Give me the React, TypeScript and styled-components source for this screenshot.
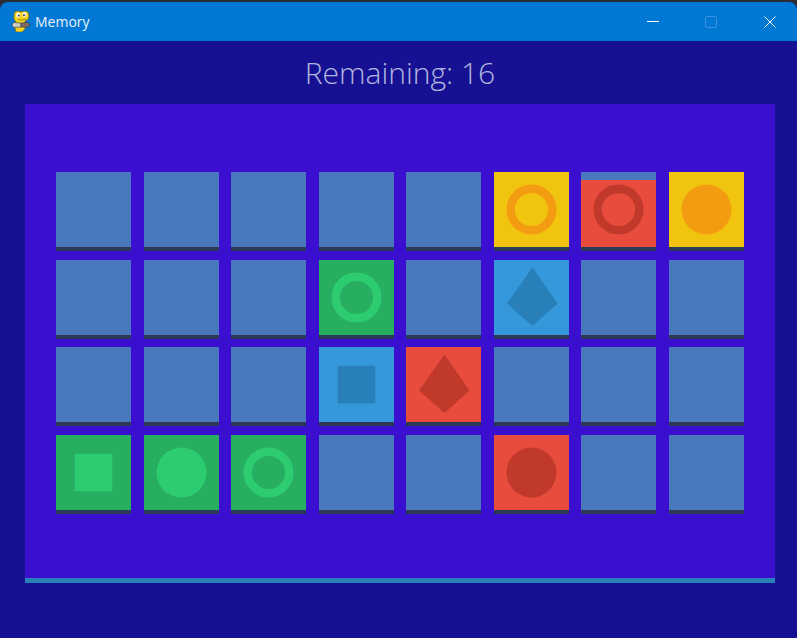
import * as React from "react";
import styled, { createGlobalStyle } from "styled-components";

type Tone = "back" | "yellow" | "red" | "green" | "blue";
type Figure = "ring" | "disc" | "square" | "diamond";

interface ICard {
  tone: Tone;
  figure?: Figure;
  flipping?: boolean;
}

const faces: Record<Tone, string> = {
  back: "#4a78bd",
  yellow: "#f1c40f",
  red: "#e74c3c",
  green: "#27ae60",
  blue: "#3498db"
};

const inks: Record<Tone, string> = {
  back: "#4a78bd",
  yellow: "#f39c12",
  red: "#c0392b",
  green: "#2ecc71",
  blue: "#2980b9"
};

const back: ICard = { tone: "back" };

const cards: ICard[] = [
  back,
  back,
  back,
  back,
  back,
  { tone: "yellow", figure: "ring" },
  { tone: "red", figure: "ring", flipping: true },
  { tone: "yellow", figure: "disc" },

  back,
  back,
  back,
  { tone: "green", figure: "ring" },
  back,
  { tone: "blue", figure: "diamond" },
  back,
  back,

  back,
  back,
  back,
  { tone: "blue", figure: "square" },
  { tone: "red", figure: "diamond" },
  back,
  back,
  back,

  { tone: "green", figure: "square" },
  { tone: "green", figure: "disc" },
  { tone: "green", figure: "ring" },
  back,
  back,
  { tone: "red", figure: "disc" },
  back,
  back
];

const Shape = ({ figure, color }: { figure: Figure; color: string }) => (
  <FigureSvg viewBox="0 0 75 75">
    {figure === "ring" && (
      <circle cx="37.5" cy="37.5" r="20.8" fill="none" stroke={color} strokeWidth="8.4" />
    )}
    {figure === "disc" && <circle cx="37.5" cy="37.5" r="25" fill={color} />}
    {figure === "square" && <rect x="18.75" y="18.75" width="37.5" height="37.5" fill={color} />}
    {figure === "diamond" && <polygon points="38.5,7.5 63.5,43.5 38.5,66 13,43.5" fill={color} />}
  </FigureSvg>
);

// the pygame snake holding its controller
const SnakeLogo = () => (
  <svg width="18" height="21" viewBox="0 0 18 21">
    <path
      d="M2 4 Q2 0 6 0 L9 1 L12 0 Q17 0 17 5 Q17 9 13 10 L13 18 L10 21 L4 21 L3 17 L4 11 Q1 8 2 4 Z"
      fill="#f5d41f"
      stroke="#7d6a10"
      strokeWidth="0.8"
    />
    <ellipse cx="6.2" cy="4" rx="2.1" ry="2.5" fill="#f6f6ee" />
    <ellipse cx="12.6" cy="3.6" rx="2.1" ry="2.5" fill="#f6f6ee" />
    <circle cx="6.8" cy="4.6" r="0.9" fill="#262626" />
    <circle cx="12" cy="4.2" r="0.9" fill="#262626" />
    <path d="M6 8.5 Q10 10 14 8" fill="none" stroke="#7d6a10" strokeWidth="0.7" />
    <path
      d="M2 11.5 L9 12 L9 16 L2.5 16.5 Q0 16 0.3 13.5 Q0.6 11.8 2 11.5 Z"
      fill="#cfccc2"
      stroke="#4c4a44"
      strokeWidth="0.7"
    />
    <path
      d="M9 12 L15.5 11.5 Q17.6 12 17.5 14 Q17.4 16 15.5 16.3 L9 16 Z"
      fill="#77716a"
      stroke="#45423d"
      strokeWidth="0.7"
    />
    <rect x="12" y="13" width="2" height="1.5" fill="#a8524a" />
  </svg>
);

const App = () => (
  <>
    <GlobalStyle />
    <Screen>
      <Window>
        <TitleBar>
          <AppIcon>
            <SnakeLogo />
          </AppIcon>
          <WindowName>Memory</WindowName>
          <Controls>
            <ControlButton>
              <svg width="12" height="12" viewBox="0 0 12 12">
                <rect x="0" y="5" width="12" height="1" fill="#ffffff" />
              </svg>
            </ControlButton>
            <ControlButton>
              <svg width="13" height="12" viewBox="0 0 13 12">
                <rect x="0.5" y="0.5" width="11" height="11" rx="1.5" fill="none" stroke="#3a93dc" />
              </svg>
            </ControlButton>
            <ControlButton>
              <svg width="12" height="12" viewBox="0 0 12 12">
                <path d="M0.5 0.5 L11.5 11.5 M11.5 0.5 L0.5 11.5" stroke="#ffffff" strokeWidth="1" />
              </svg>
            </ControlButton>
          </Controls>
        </TitleBar>
        <Content>
          <Remaining>Remaining: 16</Remaining>
          <Board>
            <Grid>
              {cards.map((card, i) => (
                <Card key={i} $tone={card.tone} $flipping={card.flipping}>
                  {card.figure && <Shape figure={card.figure} color={inks[card.tone]} />}
                </Card>
              ))}
            </Grid>
          </Board>
        </Content>
      </Window>
    </Screen>
  </>
);

const GlobalStyle = createGlobalStyle`
  html,
  body {
    margin: 0;
    padding: 0;
    overflow: hidden;
  }
`;

const Screen = styled.div`
  width: 797px;
  height: 638px;
  padding-top: 2px;
  box-sizing: border-box;
  background: #2b2d33;
`;

const Window = styled.div`
  display: flex;
  flex-direction: column;
  height: 636px;
  border-radius: 8px 8px 0 0;
  overflow: hidden;
  background: #161192;
`;

const TitleBar = styled.div`
  display: flex;
  align-items: center;
  flex: 0 0 39px;
  padding-left: 12px;
  background: #0078d4;
`;

const AppIcon = styled.div`
  display: flex;
  width: 18px;
  height: 21px;
`;

const WindowName = styled.div`
  margin-left: 5px;
  color: #e8f3fc;
  font-family: "Open Sans", sans-serif;
  font-size: 14px;
`;

const Controls = styled.div`
  display: flex;
  gap: 4.5px;
  margin-left: auto;
`;

const ControlButton = styled.div`
  display: flex;
  justify-content: center;
  align-items: center;
  width: 54px;
  height: 39px;
`;

const Content = styled.div`
  display: flex;
  flex-direction: column;
  flex: 1;
  padding: 0 22px 0 25px;
`;

const Remaining = styled.div`
  flex: 0 0 63px;
  color: #b3b5df;
  font-family: "Open Sans", sans-serif;
  font-size: 30px;
  font-weight: 300;
  line-height: 63px;
  text-align: center;
`;

const Board = styled.div`
  display: flex;
  justify-content: center;
  width: 750px;
  height: 479px;
  padding-top: 68px;
  box-sizing: border-box;
  background: #3a0fd0;
  border-bottom: 5px solid #2980b9;
`;

const Grid = styled.div`
  display: grid;
  grid-template-columns: repeat(8, 75px);
  grid-auto-rows: 75px;
  gap: 12.5px;
`;

const Card = styled.div<{ $tone: Tone; $flipping?: boolean }>`
  position: relative;
  background: ${({ $tone, $flipping }) =>
    $flipping
      ? `linear-gradient(${faces.back} 8px, ${faces[$tone]} 8px)`
      : faces[$tone]};
  box-shadow: 0 4px 0 #2c3a58;
`;

const FigureSvg = styled.svg`
  display: block;
  width: 75px;
  height: 75px;
`;

export default App;
